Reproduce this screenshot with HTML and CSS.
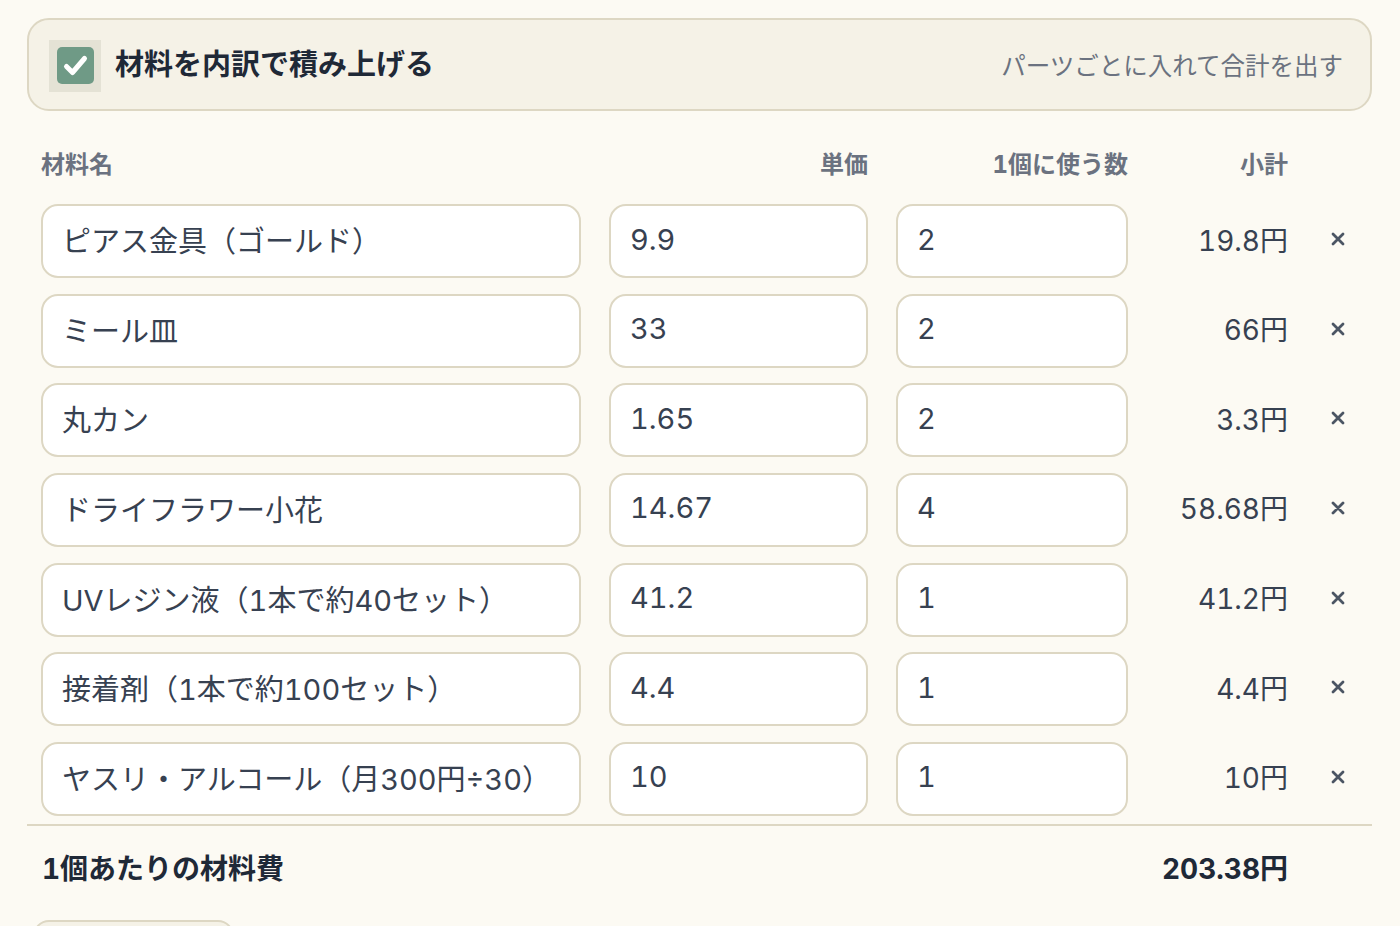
FILE: index.html
```html
<!DOCTYPE html>
<html lang="ja">
<head>
<meta charset="utf-8">
<title>材料費</title>
<link rel="stylesheet" href="styles.css">
</head>
<body>
<div class="page">
  <label class="panel">
    <span class="check-wrap">
      <span class="check">
        <svg viewBox="0 0 37 37" width="37" height="37"><path d="M9.5 19.5 L15.5 25.5 L27.5 11.5" fill="none" stroke="#fff" stroke-width="5" stroke-linecap="round" stroke-linejoin="round"/></svg>
      </span>
    </span>
    <span class="panel-title">材料を内訳で積み上げる</span>
    <span class="panel-note">パーツごとに入れて合計を出す</span>
  </label>

  <div class="table">
    <div class="grid head">
      <div class="h-name">材料名</div>
      <div class="h-right">単価</div>
      <div class="h-right">1個に使う数</div>
      <div class="h-right">小計</div>
      <div></div>
    </div>

    <div class="rows">
      <div class="grid row">
        <input class="field" value="ピアス金具（ゴールド）">
        <input class="field" value="9.9">
        <input class="field" value="2">
        <div class="sub">19.8円</div>
        <div class="del"><svg viewBox="0 0 14 14" width="14" height="14"><path d="M2 2 L12 12 M12 2 L2 12" stroke="#4b5563" stroke-width="2.8" stroke-linecap="round"/></svg></div>
      </div>
      <div class="grid row">
        <input class="field" value="ミール皿">
        <input class="field" value="33">
        <input class="field" value="2">
        <div class="sub">66円</div>
        <div class="del"><svg viewBox="0 0 14 14" width="14" height="14"><path d="M2 2 L12 12 M12 2 L2 12" stroke="#4b5563" stroke-width="2.8" stroke-linecap="round"/></svg></div>
      </div>
      <div class="grid row">
        <input class="field" value="丸カン">
        <input class="field" value="1.65">
        <input class="field" value="2">
        <div class="sub">3.3円</div>
        <div class="del"><svg viewBox="0 0 14 14" width="14" height="14"><path d="M2 2 L12 12 M12 2 L2 12" stroke="#4b5563" stroke-width="2.8" stroke-linecap="round"/></svg></div>
      </div>
      <div class="grid row">
        <input class="field" value="ドライフラワー小花">
        <input class="field" value="14.67">
        <input class="field" value="4">
        <div class="sub">58.68円</div>
        <div class="del"><svg viewBox="0 0 14 14" width="14" height="14"><path d="M2 2 L12 12 M12 2 L2 12" stroke="#4b5563" stroke-width="2.8" stroke-linecap="round"/></svg></div>
      </div>
      <div class="grid row">
        <input class="field" value="UVレジン液（1本で約40セット）">
        <input class="field" value="41.2">
        <input class="field" value="1">
        <div class="sub">41.2円</div>
        <div class="del"><svg viewBox="0 0 14 14" width="14" height="14"><path d="M2 2 L12 12 M12 2 L2 12" stroke="#4b5563" stroke-width="2.8" stroke-linecap="round"/></svg></div>
      </div>
      <div class="grid row">
        <input class="field" value="接着剤（1本で約100セット）">
        <input class="field" value="4.4">
        <input class="field" value="1">
        <div class="sub">4.4円</div>
        <div class="del"><svg viewBox="0 0 14 14" width="14" height="14"><path d="M2 2 L12 12 M12 2 L2 12" stroke="#4b5563" stroke-width="2.8" stroke-linecap="round"/></svg></div>
      </div>
      <div class="grid row">
        <input class="field" value="ヤスリ・アルコール（月300円÷30）">
        <input class="field" value="10">
        <input class="field" value="1">
        <div class="sub">10円</div>
        <div class="del"><svg viewBox="0 0 14 14" width="14" height="14"><path d="M2 2 L12 12 M12 2 L2 12" stroke="#4b5563" stroke-width="2.8" stroke-linecap="round"/></svg></div>
      </div>
    </div>
  </div>

  <div class="divider"></div>

  <div class="table">
    <div class="grid total">
      <div class="total-label">1個あたりの材料費</div>
      <div class="total-value">203.38円</div>
      <div></div>
    </div>
  </div>

  <button class="add"><span class="add-text">＋ 材料を追加</span></button>
</div>
</body>
</html>
```
FILE: styles.css
```css
html, body {
  margin: 0;
  padding: 0;
  background: #fcfaf3;
}
body {
  font-family: "Inter", "Noto Sans CJK JP", "Noto Sans", sans-serif;
  font-variant-numeric: tabular-nums;
  color: #1f2937;
  overflow: hidden;
}
.page {
  padding: 18px 28px 0 27px;
}
.panel {
  box-sizing: border-box;
  height: 93px;
  display: flex;
  align-items: center;
  border: 2px solid #ddd7c3;
  border-radius: 22px;
  background: #f5f2e7;
  padding: 2px 27px 0 20px;
}
.check-wrap {
  width: 52px;
  height: 52px;
  background: #e4e2d5;
  display: grid;
  place-items: center;
  flex: none;
}
.check {
  width: 37px;
  height: 37px;
  border-radius: 5px;
  background: #6f9a86;
  display: block;
}
.check svg { display: block; }
.panel-title {
  margin-left: 14px;
  margin-top: -8px;
  font-size: 29px;
  font-weight: 700;
  color: #1f2937;
}
.panel-note {
  margin-left: auto;
  margin-top: -3px;
  font-size: 24.5px;
  color: #6b7280;
}
.table {
  padding: 0 14px;
}
.grid {
  display: grid;
  grid-template-columns: 540px 259px 232px 1fr 42px;
  column-gap: 28px;
  align-items: center;
}
.head {
  margin-top: 31px;
  height: 40px;
  font-size: 24px;
  font-weight: 700;
  color: #6b7280;
}
.h-right {
  text-align: right;
}
.rows {
  margin-top: 22px;
  display: flex;
  flex-direction: column;
  gap: 15.67px;
}
.row {
  height: 74px;
}
.field {
  box-sizing: border-box;
  width: 100%;
  height: 74px;
  border: 2px solid #ddd7c3;
  border-radius: 17px;
  background: #fff;
  padding: 0 19px 4px;
  font-family: "Inter", "Noto Sans CJK JP", "Noto Sans", sans-serif;
  font-variant-numeric: tabular-nums;
  font-size: 29px;
  color: #374151;
  outline: none;
}
.sub {
  text-align: right;
  font-size: 28px;
  color: #374151;
  padding-bottom: 5px;
}
.del {
  display: flex;
  justify-content: center;
  padding-left: 2px;
  padding-bottom: 4px;
}
.del svg { display: block; }
.divider {
  margin-top: 8px;
  border-top: 2px solid #ddd7c3;
}
.total {
  height: 82px;
  font-size: 28px;
  font-weight: 700;
  color: #1f2937;
}
.total-label {
  grid-column: 1 / 4;
  padding-left: 1px;
}
.total-value {
  text-align: right;
}
.add {
  display: block;
  margin: 12px 0 0 6px;
  width: 201px;
  height: 90px;
  border: 2px solid #ddd7c3;
  border-radius: 16px;
  background: #f5f2e7;
  padding: 40px 0 0;
  font-family: "Inter", "Noto Sans CJK JP", "Noto Sans", sans-serif;
  font-size: 22px;
  line-height: 30px;
  color: #374151;
}
.add-text {
  display: block;
}
```
